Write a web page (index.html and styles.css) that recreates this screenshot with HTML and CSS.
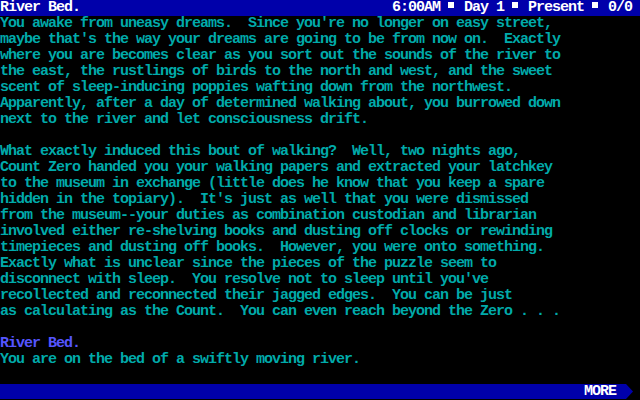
FILE: index.html
```html
<!DOCTYPE html>
<html>
<head>
<meta charset="utf-8">
<link rel="stylesheet" href="styles.css">
</head>
<body>
<div class="screen">
  <header class="status">
    <span class="room">River Bed.</span>
    <span class="info">6:00AM <span class="sq"></span> Day 1 <span class="sq"></span> Present <span class="sq"></span> 0/0</span>
  </header>
  <main class="text"><div class="para">You awake from uneasy dreams.  Since you're no longer on easy street,
maybe that's the way your dreams are going to be from now on.  Exactly
where you are becomes clear as you sort out the sounds of the river to
the east, the rustlings of birds to the north and west, and the sweet
scent of sleep-inducing poppies wafting down from the northwest.
Apparently, after a day of determined walking about, you burrowed down
next to the river and let consciousness drift.

What exactly induced this bout of walking?  Well, two nights ago,
Count Zero handed you your walking papers and extracted your latchkey
to the museum in exchange (little does he know that you keep a spare
hidden in the topiary).  It's just as well that you were dismissed
from the museum--your duties as combination custodian and librarian
involved either re-shelving books and dusting off clocks or rewinding
timepieces and dusting off books.  However, you were onto something.
Exactly what is unclear since the pieces of the puzzle seem to
disconnect with sleep.  You resolve not to sleep until you've
recollected and reconnected their jagged edges.  You can be just
as calculating as the Count.  You can even reach beyond the Zero . . .
</div><div class="para"><span class="heading">River Bed.</span>
You are on the bed of a swiftly moving river.</div></main>
  <footer class="more-row">
    <div class="more-bar"><span class="more">MORE</span></div>
    <svg class="arrow" width="7" height="15" viewBox="0 0 7 15"><polygon points="0,0 7,7.5 0,15" fill="#0000AA"/></svg>
  </footer>
</div>
</body>
</html>
```
FILE: styles.css
```css
html, body {
  margin: 0;
  padding: 0;
  background: #000;
}
.screen {
  width: 640px;
  height: 400px;
  overflow: hidden;
  display: flex;
  flex-direction: column;
  font-family: "Liberation Mono", "DejaVu Sans Mono", monospace;
  font-size: 15px;
  font-weight: bold;
  letter-spacing: -1px;
  line-height: 16px;
  color: #00AAAA;
}
.status {
  height: 16px;
  flex: 0 0 16px;
  background: #0000AA;
  color: #FFFFFF;
  display: flex;
  justify-content: space-between;
  padding-right: 8px;
  white-space: pre;
}
.sq {
  display: inline-block;
  width: 6px;
  height: 6px;
  background: #FFFFFF;
  margin: 0 2px 0 0;
  vertical-align: 3px;
}
.text {
  flex: 1;
  white-space: pre;
}
.para + .para {
  margin-top: 16px;
}
.heading {
  color: #5555FF;
}
.more-row {
  flex: 0 0 16px;
  height: 16px;
  display: flex;
  align-items: flex-start;
  padding-right: 7px;
}
.more-bar {
  flex: 1;
  height: 15px;
  background: #0000AA;
  display: flex;
  justify-content: flex-end;
  padding-right: 10px;
}
.more {
  color: #FFFFFF;
  line-height: 15px;
}
.arrow {
  display: block;
}
```
